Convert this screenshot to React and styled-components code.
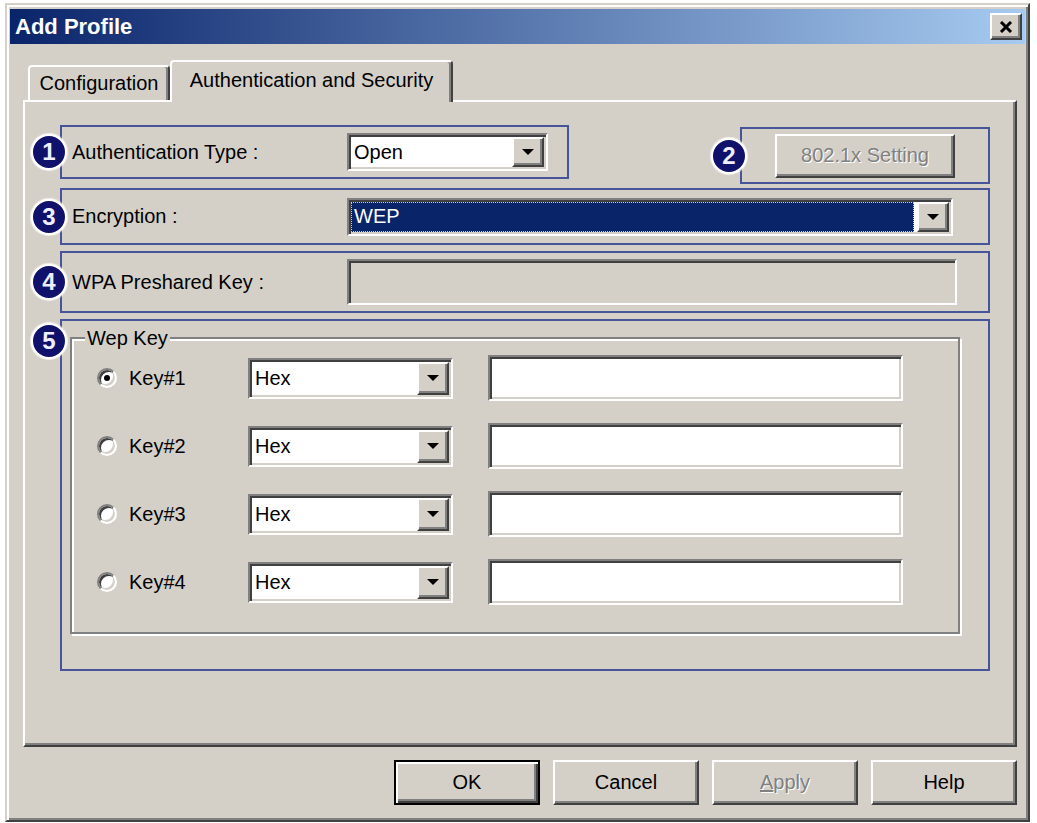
import styled, { createGlobalStyle, css } from "styled-components";

const FACE = "#d4d0c8";

const GlobalStyle = createGlobalStyle`
  html, body {
    margin: 0;
    padding: 0;
    background: #ffffff;
  }
  body {
    font-family: "Liberation Sans", Arial, sans-serif;
    font-size: 20px;
    color: #000000;
  }
  * {
    box-sizing: border-box;
  }
`;

const raised = css`
  background: ${FACE};
  border: 2px solid;
  border-color: #ffffff #404040 #404040 #ffffff;
  box-shadow: inset -2px -2px 0 #808080;
`;

const sunken = css`
  border: 2px solid;
  border-color: #808080 #ffffff #ffffff #808080;
  box-shadow: inset 2px 2px 0 #404040, inset -2px -2px 0 ${FACE};
`;

const Window = styled.div`
  width: 1025px;
  height: 819px;
  margin: 3px 0 0 5px;
  background: ${FACE};
  border: 2px solid;
  border-color: ${FACE} #404040 #404040 ${FACE};
  box-shadow: inset 2px 2px 0 #ffffff, inset -2px -2px 0 #808080;
  padding: 4px 3px 3px 3px;
  display: flex;
  flex-direction: column;
`;

const TitleBar = styled.div`
  height: 35px;
  display: flex;
  align-items: center;
  justify-content: space-between;
  padding: 0 3px 0 5px;
  background: linear-gradient(90deg, #0a246a 0%, #a6caf0 100%);
`;

const Title = styled.span`
  color: #ffffff;
  font-weight: 700;
  font-size: 22px;
`;

const CloseButton = styled.button`
  ${raised};
  width: 32px;
  height: 27px;
  padding: 0;
  display: flex;
  align-items: center;
  justify-content: center;
`;

const Body = styled.div`
  padding: 16px 8px 0 13px;
  display: flex;
  flex-direction: column;
`;

const TabStrip = styled.div`
  position: relative;
  z-index: 1;
  display: flex;
  align-items: flex-end;
  height: 40px;
  padding-left: 5px;
`;

const Tab = styled.div`
  width: ${(p) => p.$width}px;
  height: ${(p) => (p.$active ? 42 : 35)}px;
  margin-bottom: ${(p) => (p.$active ? -2 : 0)}px;
  padding-bottom: ${(p) => (p.$active ? 4 : 0)}px;
  background: ${FACE};
  border: 2px solid;
  border-bottom: none;
  border-color: #ffffff #404040 transparent #ffffff;
  box-shadow: inset -2px 0 0 #808080;
  border-radius: 4px 4px 0 0;
  display: flex;
  align-items: center;
  justify-content: center;
  white-space: nowrap;
`;

const Panel = styled.div`
  height: 647px;
  ${raised};
  padding: 23px 25px 0 35px;
  display: flex;
  flex-direction: column;
`;

const TopRow = styled.div`
  display: flex;
  justify-content: space-between;
  align-items: flex-start;
`;

const Group = styled.div`
  position: relative;
  width: ${(p) => (p.$width ? `${p.$width}px` : "auto")};
  height: ${(p) => (p.$height ? `${p.$height}px` : "auto")};
  margin-top: ${(p) => p.$mt || 0}px;
  border: 2px solid #46559a;
  display: flex;
  align-items: center;
  justify-content: ${(p) => (p.$center ? "center" : "flex-start")};
  padding-left: ${(p) => (p.$center ? 0 : 10)}px;
`;

const WepGroup = styled.div`
  position: relative;
  margin-top: 6px;
  border: 2px solid #46559a;
  padding: 6px 28px 35px 8px;
`;

const Badge = styled.span`
  position: absolute;
  left: -31px;
  top: ${(p) => (p.$top != null ? `${p.$top}px` : "50%")};
  transform: ${(p) => (p.$top != null ? "none" : "translateY(-50%)")};
  width: 36px;
  height: 36px;
  border-radius: 50%;
  background: #10116b;
  border: 2px solid #ffffff;
  box-shadow: 0 0 1px 1px rgba(255, 255, 255, 0.7);
  color: #eeeeff;
  font-weight: 700;
  font-size: 24px;
  line-height: 1;
  display: flex;
  align-items: center;
  justify-content: center;
  z-index: 2;
`;

const Label = styled.span`
  flex: 0 0 275px;
  white-space: nowrap;
`;

const ComboBox = styled.div`
  ${sunken};
  background: #ffffff;
  width: ${(p) => p.$width}px;
  height: ${(p) => p.$height}px;
  padding: 2px;
  display: flex;
  align-items: stretch;
  flex: none;
`;

const ComboValue = styled.div`
  flex: 1;
  display: flex;
  align-items: center;
  padding-left: 3px;
  ${(p) =>
    p.$selected &&
    css`
      background: #0a246a;
      color: #ffffff;
      outline: 1px dotted #d8d0a0;
      outline-offset: -1px;
      margin: 0 3px 0 0;
    `}
`;

const DropButton = styled.div`
  ${raised};
  width: 32px;
  flex: none;
  display: flex;
  align-items: center;
  justify-content: center;

  &::after {
    content: "";
    border-left: 6px solid transparent;
    border-right: 6px solid transparent;
    border-top: 6px solid #000000;
  }
`;

const TextField = styled.div`
  ${sunken};
  background: ${(p) => (p.$disabled ? FACE : "#ffffff")};
  width: ${(p) => p.$width}px;
  height: ${(p) => p.$height}px;
  margin-left: ${(p) => p.$ml || 0}px;
  flex: none;
`;

const PushButton = styled.button`
  ${raised};
  width: ${(p) => p.$width || 146}px;
  height: ${(p) => p.$height || 45}px;
  padding: 0;
  font-family: inherit;
  font-size: 20px;
  color: ${(p) => (p.$disabled ? "#808080" : "#000000")};
  text-shadow: ${(p) => (p.$disabled ? "1px 1px 0 #ffffff" : "none")};

  ${(p) =>
    p.$default &&
    css`
      border: 2px solid #000000;
      box-shadow: inset 2px 2px 0 #ffffff, inset -2px -2px 0 #404040,
        inset -4px -4px 0 #808080;
    `}
`;

const WepFieldset = styled.fieldset`
  margin: 0;
  padding: 6px 0 27px 13px;
  border: 2px solid #808080;
  box-shadow: inset 2px 2px 0 #ffffff, 2px 2px 0 #ffffff;
`;

const Legend = styled.legend`
  padding: 0 2px;
  line-height: 22px;
  background: ${FACE};
`;

const KeyRows = styled.div`
  display: flex;
  flex-direction: column;
  gap: 22px;
  padding-left: 12px;
`;

const KeyRow = styled.div`
  display: flex;
  align-items: center;
  height: 46px;
`;

const KeyChoice = styled.label`
  width: 151px;
  display: flex;
  align-items: center;
  gap: 12px;
`;

const Radio = styled.span`
  width: 20px;
  height: 20px;
  border-radius: 50%;
  border: 2px solid;
  border-color: #808080 #ffffff #ffffff #808080;
  box-shadow: inset 2px 2px 0 #404040, inset -2px -2px 0 ${FACE};
  background: #ffffff;
  display: flex;
  align-items: center;
  justify-content: center;
  flex: none;

  &::after {
    content: "";
    width: 6px;
    height: 6px;
    border-radius: 50%;
    background: ${(p) => (p.$checked ? "#000000" : "transparent")};
  }
`;

const ButtonRow = styled.div`
  display: flex;
  justify-content: flex-end;
  gap: 13px;
  margin-top: 13px;
`;

const keys = ["Key#1", "Key#2", "Key#3", "Key#4"];

function Combo({ width, height, value, selected }) {
  return (
    <ComboBox $width={width} $height={height}>
      <ComboValue $selected={selected}>{value}</ComboValue>
      <DropButton />
    </ComboBox>
  );
}

export default function App() {
  return (
    <>
      <GlobalStyle />
      <Window>
        <TitleBar>
          <Title>Add Profile</Title>
          <CloseButton aria-label="Close">
            <svg width="14" height="12" viewBox="0 0 14 12">
              <path d="M2 1 L12 11 M12 1 L2 11" stroke="#000" strokeWidth="3" />
            </svg>
          </CloseButton>
        </TitleBar>
        <Body>
          <TabStrip>
            <Tab $width={142}>Configuration</Tab>
            <Tab $width={283} $active>
              Authentication and Security
            </Tab>
          </TabStrip>
          <Panel>
            <TopRow>
              <Group $width={509} $height={54}>
                <Badge>1</Badge>
                <Label>Authentication Type :</Label>
                <Combo width={201} height={38} value="Open" />
              </Group>
              <Group $width={250} $height={57} $mt={2} $center>
                <Badge>2</Badge>
                <PushButton $width={180} $height={44} $disabled>
                  802.1x Setting
                </PushButton>
              </Group>
            </TopRow>
            <Group $height={57} $mt={4}>
              <Badge>3</Badge>
              <Label>Encryption :</Label>
              <Combo width={606} height={38} value="WEP" selected />
            </Group>
            <Group $height={62} $mt={6}>
              <Badge>4</Badge>
              <Label>WPA Preshared Key :</Label>
              <TextField $width={610} $height={46} $disabled />
            </Group>
            <WepGroup>
              <Badge $top={2}>5</Badge>
              <WepFieldset>
                <Legend>Wep Key</Legend>
                <KeyRows>
                  {keys.map((k, i) => (
                    <KeyRow key={k}>
                      <KeyChoice>
                        <Radio $checked={i === 0} />
                        {k}
                      </KeyChoice>
                      <Combo width={205} height={41} value="Hex" />
                      <TextField $width={415} $height={46} $ml={35} />
                    </KeyRow>
                  ))}
                </KeyRows>
              </WepFieldset>
            </WepGroup>
          </Panel>
          <ButtonRow>
            <PushButton $default>OK</PushButton>
            <PushButton>Cancel</PushButton>
            <PushButton $disabled>
              <u>A</u>pply
            </PushButton>
            <PushButton>Help</PushButton>
          </ButtonRow>
        </Body>
      </Window>
    </>
  );
}
